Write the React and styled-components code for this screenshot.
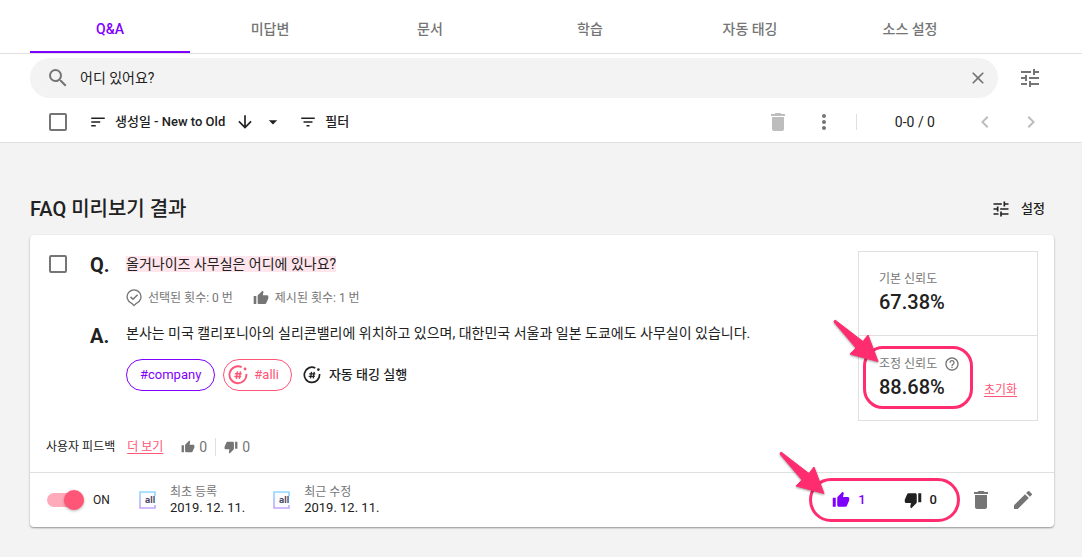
import React from "react";
import styled, { createGlobalStyle, css } from "styled-components";
import {
  MdArrowDownward,
  MdArrowDropDown,
  MdChevronLeft,
  MdChevronRight,
  MdClose,
  MdDelete,
  MdEdit,
  MdFilterList,
  MdHelpOutline,
  MdMoreVert,
  MdSearch,
  MdSort,
  MdThumbDown,
  MdThumbUp,
  MdTune,
} from "react-icons/md";

const color = {
  primary: "#7f00ff",
  pink: "#ff5576",
  mark: "#ff2d6f",
  text: "#212121",
  muted: "#757575",
  faint: "#bdbdbd",
  line: "#e0e0e0",
  page: "#f3f3f3",
};

const GlobalStyle = createGlobalStyle`
  *, *::before, *::after { box-sizing: border-box; }
  body {
    margin: 0;
    background: ${color.page};
    color: ${color.text};
    font-family: Roboto, "Noto Sans CJK KR", sans-serif;
    font-size: 14px;
    line-height: 20px;
  }
  button, input { font: inherit; color: inherit; }
  h1, h2, p, dl, dd { margin: 0; }
  svg { display: block; flex: none; }
`;

const Header = styled.header`
  background: #fff;
  border-bottom: 1px solid ${color.line};
`;

const Tabs = styled.nav`
  display: flex;
  height: 54px;
  padding: 0 30px;
  border-bottom: 1px solid ${color.line};
`;

const Tab = styled.button`
  flex: 0 1 160px;
  padding: 6px 0 0;
  border: 0;
  border-bottom: 2px solid ${(p) => (p.$active ? color.primary : "transparent")};
  background: none;
  color: ${(p) => (p.$active ? color.primary : color.muted)};
  font-weight: 500;
  cursor: pointer;
`;

const SearchRow = styled.form`
  display: flex;
  align-items: center;
  gap: 20px;
  padding: 4px 40px 0 30px;
`;

const SearchBox = styled.label`
  display: flex;
  flex: 1;
  align-items: center;
  gap: 10px;
  height: 40px;
  padding: 0 10px 0 16px;
  border-radius: 20px;
  background: ${color.page};
  color: ${color.muted};
`;

const SearchInput = styled.input`
  flex: 1;
  min-width: 0;
  padding: 0;
  border: 0;
  outline: 0;
  background: none;
  color: ${color.text};
`;

const IconButton = styled.button`
  display: flex;
  align-items: center;
  justify-content: center;
  padding: 0;
  border: 0;
  background: none;
  color: ${(p) => p.$tone || color.muted};
  cursor: pointer;
`;

const TextButton = styled.button`
  display: flex;
  align-items: center;
  gap: ${(p) => p.$gap || 8}px;
  padding: 0;
  border: 0;
  background: none;
  color: ${(p) => p.$tone || color.text};
  font-size: 13px;
  font-weight: 500;
  white-space: nowrap;
  cursor: pointer;
`;

const SortName = styled.span`
  padding-right: 2px;
`;

const Toolbar = styled.div`
  display: flex;
  align-items: center;
  justify-content: space-between;
  height: 44px;
  padding: 4px 39px 0 49px;
`;

const ToolGroup = styled.div`
  display: flex;
  align-items: center;
  gap: ${(p) => p.$gap}px;
`;

const Checkbox = styled.input`
  flex: none;
  width: 18px;
  height: 18px;
  margin: 0;
  appearance: none;
  border: 2px solid ${color.muted};
  border-radius: 2px;
  background: #fff;
  &:checked { background: ${color.primary}; }
`;

const AllCheckbox = styled(Checkbox)`
  margin-right: 6px;
`;

const Divider = styled.span`
  width: 1px;
  height: ${(p) => p.$height || 16}px;
  background: ${color.line};
`;

const Pager = styled.div`
  display: flex;
  align-items: center;
  gap: 22px;
`;

const PageCount = styled.span`
  padding: 0 16px;
`;

const Main = styled.main`
  padding: 52px 28px 30px 30px;
`;

const SectionHead = styled.div`
  display: flex;
  align-items: center;
  justify-content: space-between;
  height: 28px;
  margin-bottom: 12px;
  padding-right: 9px;
`;

const Title = styled.h1`
  font-size: 20px;
  font-weight: 500;
  line-height: 28px;
`;

const Card = styled.article`
  border-radius: 4px;
  background: #fff;
  box-shadow: 0 1px 2px rgba(0, 0, 0, 0.4);
`;

const CardBody = styled.div`
  display: flex;
  align-items: flex-start;
  padding: 16px 16px 0 19px;
`;

const SelectCell = styled.div`
  padding: 4px 23px 0 0;
`;

const Content = styled.div`
  display: grid;
  grid-template-columns: 36px 1fr;
  flex: 1;
  min-width: 0;
`;

const Letter = styled.h2`
  font-size: 20px;
  font-weight: 700;
  line-height: 28px;
`;

const Question = styled.p`
  line-height: 26px;
`;

const Highlight = styled.mark`
  background: #ffe6ec;
  color: inherit;
`;

const Stats = styled.div`
  display: flex;
  gap: 20px;
  margin: 11px 0 14px;
  color: ${color.muted};
  font-size: 12px;
`;

const Stat = styled.span`
  display: flex;
  align-items: center;
  gap: 6px;
`;

const Answer = styled.p`
  line-height: 22px;
`;

const TagRow = styled.div`
  display: flex;
  align-items: center;
  gap: 8px;
  margin-top: 15px;
`;

const Tag = styled.button`
  display: flex;
  align-items: center;
  gap: 6px;
  height: 32px;
  padding: ${(p) => (p.$icon ? "0 12px 0 4px" : "0 13px")};
  border: 1px solid currentColor;
  border-radius: 16px;
  background: #fff;
  color: ${(p) => p.$tone};
  font-size: 13px;
  cursor: pointer;
`;

const AutoTag = styled(TextButton)`
  margin-left: 3px;
`;

const Scores = styled.dl`
  flex: none;
  width: 180px;
  border: 1px solid ${color.line};
`;

const Score = styled.div`
  position: relative;
  height: 83px;
  padding: 17px 20px 0;
  & + & {
    height: 85px;
    padding-top: 18px;
    border-top: 1px solid ${color.line};
  }
`;

const ScoreLabel = styled.dt`
  display: flex;
  align-items: center;
  gap: 7px;
  color: ${color.muted};
  font-size: 12px;
`;

const ScoreValue = styled.dd`
  display: flex;
  align-items: baseline;
  justify-content: space-between;
  font-size: 20px;
  font-weight: 500;
  line-height: 26px;
`;

const PinkLink = styled.a`
  color: ${color.pink};
  font-size: 12px;
  font-weight: 400;
  line-height: 20px;
  text-underline-offset: 2px;
`;

const Feedback = styled.div`
  display: flex;
  align-items: center;
  gap: 12px;
  padding: 16px 16px 15px;
  font-size: 12px;
`;

const Votes = styled.span`
  display: flex;
  align-items: center;
  gap: 8px;
  margin-left: 6px;
  color: ${color.muted};
  font-size: 14px;
`;

const Vote = styled.span`
  display: flex;
  align-items: center;
  gap: 4px;
`;

const CardFooter = styled.footer`
  display: flex;
  align-items: center;
  justify-content: space-between;
  height: 55px;
  padding: 0 19px 0 17px;
  border-top: 1px solid ${color.line};
`;

const SwitchLabel = styled.label`
  display: flex;
  align-items: center;
  gap: 9px;
  width: 64px;
  font-size: 12px;
`;

const Switch = styled.input`
  display: flex;
  flex: none;
  align-items: center;
  justify-content: flex-start;
  width: 37px;
  height: 14px;
  margin: 0;
  appearance: none;
  border-radius: 7px;
  background: #ffaaba;
  &::before {
    content: "";
    width: 20px;
    height: 20px;
    border-radius: 50%;
    background: ${color.pink};
    box-shadow: 0 1px 3px rgba(0, 0, 0, 0.3);
  }
  &:checked { justify-content: flex-end; }
`;

const Stamp = styled.div`
  display: flex;
  align-items: center;
  gap: 13px;
  font-size: 13px;
  line-height: 15px;
`;

const StampLabel = styled.div`
  color: ${color.muted};
  font-size: 12px;
`;

const VoteActions = styled.div`
  position: relative;
  display: flex;
  gap: 38px;
  margin-right: 14px;
`;

const outline = css`
  position: absolute;
  border: 3px solid ${color.mark};
  pointer-events: none;
`;

const ScoreRing = styled.span`
  ${outline}
  inset: 10px 64px 11px 4px;
  border-radius: 20px;
`;

const VoteRing = styled.span`
  ${outline}
  inset: -12px -23px;
  border-radius: 22px;
`;

const ArrowDrawing = styled.svg`
  position: absolute;
  top: ${(p) => p.$top}px;
  left: ${(p) => p.$left}px;
  overflow: visible;
  pointer-events: none;
  filter: drop-shadow(0 1px 1px rgba(0, 0, 0, 0.4));
`;

function Arrow({ top, left }) {
  return (
    <ArrowDrawing $top={top} $left={left} width="46" height="42" viewBox="0 0 46 42" aria-hidden="true">
      <path
        d="M1 0 29 21.500 34 15 44 41.500 16 34 22 28 0 2Z"
        fill={color.mark}
        stroke={color.mark}
        strokeWidth="1"
        strokeLinejoin="round"
      />
    </ArrowDrawing>
  );
}

function HashIcon({ size }) {
  return (
    <svg width={size} height={size} viewBox="0 0 18 18" fill="none" stroke="currentColor" aria-hidden="true">
      <path d="M12.300 2A7.600 7.600 0 1 0 16.500 8" strokeWidth="1.700" />
      <circle cx="15.400" cy="3.600" r="1.300" fill="currentColor" stroke="none" />
      <path d="M8.500 5.800 7.500 12.400M11.200 5.800 10.200 12.400M6.200 7.900H12.300M5.700 10.300H11.800" strokeWidth="1.300" />
    </svg>
  );
}

function PickedIcon() {
  return (
    <svg width="16" height="18" viewBox="0 0 16 18" fill="none" stroke="currentColor" aria-hidden="true">
      <path d="M5.700 14.300A6.900 6.900 0 1 1 10.400 14.300L8 16.600Z" strokeWidth="1.300" strokeLinejoin="round" />
      <path d="M4.500 7.900 7 10.300 11.600 5.700" strokeWidth="1.500" />
    </svg>
  );
}

function AlliLogo({ id }) {
  return (
    <svg width="18" height="18" viewBox="0 0 18 18" aria-hidden="true">
      <defs>
        <linearGradient id={id} x1="0" y1="0" x2="0" y2="1">
          <stop offset="0" stopColor="#8fd8ff" />
          <stop offset="1" stopColor="#c4a4ff" />
        </linearGradient>
      </defs>
      <path
        d="M16 5V1H1V17H16V14"
        fill="#fbfcff"
        stroke={`url(#${id})`}
        strokeWidth="1.600"
      />
      <text x="6" y="12" fontFamily="Inter, sans-serif" fontSize="9" fontWeight="700" fill="#4a4a68">
        all
      </text>
    </svg>
  );
}

const tabs = ["Q&A", "미답변", "문서", "학습", "자동 태깅", "소스 설정"];

const stamps = [
  { id: "created", label: "최초 등록", date: "2019. 12. 11." },
  { id: "updated", label: "최근 수정", date: "2019. 12. 11." },
];

export default function App() {
  return (
    <>
      <GlobalStyle />
      <Header>
        <Tabs role="tablist">
          {tabs.map((name, i) => (
            <Tab key={name} role="tab" aria-selected={i === 0} $active={i === 0}>
              {name}
            </Tab>
          ))}
        </Tabs>
        <SearchRow onSubmit={(e) => e.preventDefault()}>
          <SearchBox>
            <MdSearch size={24} />
            <SearchInput aria-label="검색" defaultValue="어디 있어요?" />
            <IconButton type="button" aria-label="지우기">
              <MdClose size={20} />
            </IconButton>
          </SearchBox>
          <IconButton type="button" aria-label="검색 옵션">
            <MdTune size={24} />
          </IconButton>
        </SearchRow>
        <Toolbar>
          <ToolGroup $gap={16}>
            <AllCheckbox type="checkbox" aria-label="모두 선택" />
            <TextButton>
              <MdSort size={18} />
              <SortName>생성일 - New to Old</SortName>
              <MdArrowDownward size={20} />
              <MdArrowDropDown size={20} />
            </TextButton>
            <TextButton>
              <MdFilterList size={18} />
              필터
            </TextButton>
          </ToolGroup>
          <ToolGroup $gap={20}>
            <ToolGroup $gap={22}>
              <IconButton aria-label="삭제" $tone={color.faint}>
                <MdDelete size={24} />
              </IconButton>
              <IconButton aria-label="더 많은 작업">
                <MdMoreVert size={24} />
              </IconButton>
            </ToolGroup>
            <Pager>
              <Divider />
              <PageCount>0-0 / 0</PageCount>
              <IconButton aria-label="이전" $tone={color.faint}>
                <MdChevronLeft size={24} />
              </IconButton>
              <IconButton aria-label="다음" $tone={color.faint}>
                <MdChevronRight size={24} />
              </IconButton>
            </Pager>
          </ToolGroup>
        </Toolbar>
      </Header>

      <Main>
        <SectionHead>
          <Title>FAQ 미리보기 결과</Title>
          <TextButton $gap={10}>
            <MdTune size={20} />
            설정
          </TextButton>
        </SectionHead>

        <Card>
          <CardBody>
            <SelectCell>
              <Checkbox type="checkbox" aria-label="질문 선택" />
            </SelectCell>
            <Content>
              <Letter>Q.</Letter>
              <div>
                <Question>
                  <Highlight>올거나이즈 사무실은 어디에 있나요?</Highlight>
                </Question>
                <Stats>
                  <Stat>
                    <PickedIcon />
                    선택된 횟수: 0 번
                  </Stat>
                  <Stat>
                    <MdThumbUp size={16} />
                    제시된 횟수: 1 번
                  </Stat>
                </Stats>
              </div>
              <Letter>A.</Letter>
              <div>
                <Answer>
                  본사는 미국 캘리포니아의 실리콘밸리에 위치하고 있으며, 대한민국 서울과 일본 도쿄에도 사무실이 있습니다.
                </Answer>
                <TagRow>
                  <Tag $tone={color.primary}>#company</Tag>
                  <Tag $tone={color.pink} $icon>
                    <HashIcon size={20} />
                    #alli
                  </Tag>
                  <AutoTag>
                    <HashIcon size={18} />
                    자동 태깅 실행
                  </AutoTag>
                </TagRow>
              </div>
            </Content>
            <Scores>
              <Score>
                <ScoreLabel>기본 신뢰도</ScoreLabel>
                <ScoreValue>67.38%</ScoreValue>
              </Score>
              <Score>
                <ScoreLabel>
                  조정 신뢰도
                  <MdHelpOutline size={16} />
                </ScoreLabel>
                <ScoreValue>
                  88.68%
                  <PinkLink href="#reset">초기화</PinkLink>
                </ScoreValue>
                <ScoreRing />
                <Arrow top={-16} left={-25} />
              </Score>
            </Scores>
          </CardBody>

          <Feedback>
            사용자 피드백
            <PinkLink href="#feedback">더 보기</PinkLink>
            <Votes>
              <Vote>
                <MdThumbUp size={14} />0
              </Vote>
              <Divider $height={18} />
              <Vote>
                <MdThumbDown size={14} />0
              </Vote>
            </Votes>
          </Feedback>

          <CardFooter>
            <ToolGroup $gap={28}>
              <SwitchLabel>
                <Switch type="checkbox" defaultChecked />
                ON
              </SwitchLabel>
              {stamps.map((s) => (
                <Stamp key={s.id}>
                  <AlliLogo id={s.id} />
                  <div>
                    <StampLabel>{s.label}</StampLabel>
                    <time>{s.date}</time>
                  </div>
                </Stamp>
              ))}
            </ToolGroup>
            <ToolGroup $gap={18}>
              <VoteActions>
                <TextButton $tone={color.primary} aria-label="좋아요 1">
                  <MdThumbUp size={18} />1
                </TextButton>
                <TextButton aria-label="싫어요 0">
                  <MdThumbDown size={18} />0
                </TextButton>
                <VoteRing />
                <Arrow top={-38} left={-52} />
              </VoteActions>
              <IconButton aria-label="삭제">
                <MdDelete size={24} />
              </IconButton>
              <IconButton aria-label="수정">
                <MdEdit size={24} />
              </IconButton>
            </ToolGroup>
          </CardFooter>
        </Card>
      </Main>
    </>
  );
}
